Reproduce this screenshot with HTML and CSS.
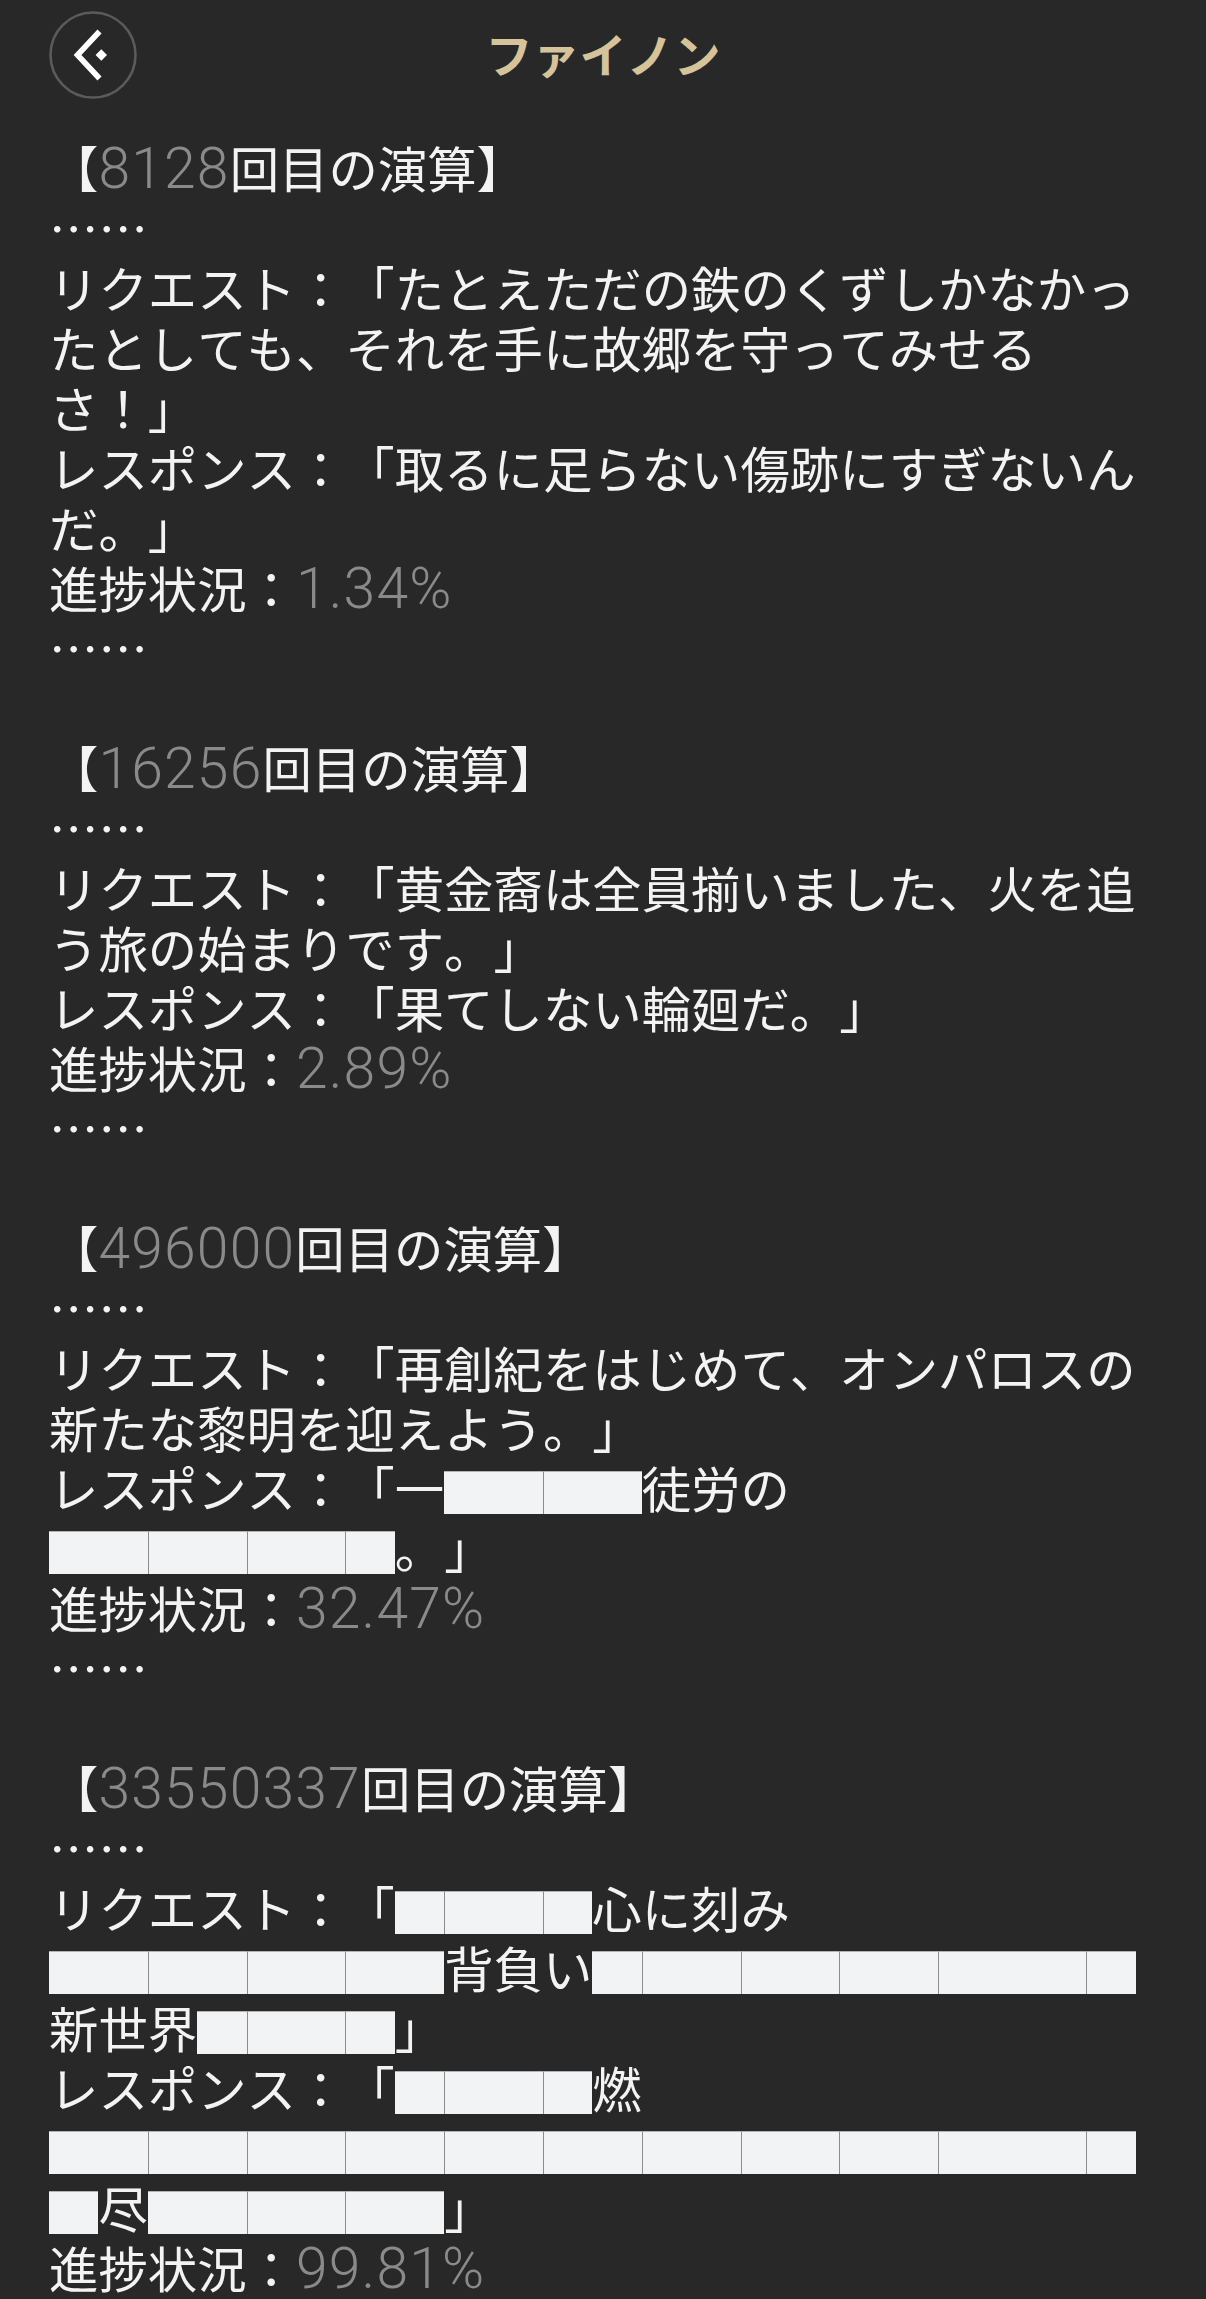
FILE: index.html
```html
<!DOCTYPE html>
<html lang="ja">
<head>
<meta charset="utf-8">
<title>ファイノン</title>
<link rel="stylesheet" href="styles.css">
</head>
<body>
<header class="header">
  <div class="back">
    <svg width="90" height="90" viewBox="0 0 90 90">
      <circle cx="45" cy="45" r="42.5" fill="none" stroke="#5b5b5b" stroke-width="2.6"/>
      <polyline points="51.5,21.5 29.5,45 51.5,68.5" fill="none" stroke="#ffffff" stroke-width="5.6" stroke-linejoin="miter" stroke-miterlimit="10"/>
      <polygon points="53.3,39.3 59,45 53.3,50.7 47.6,45" fill="#ffffff"/>
    </svg>
  </div>
  <h1 class="title">ファイノン</h1>
  <div></div>
</header>
<main class="content">
  <section class="entry">
    <div class="ln">【<span class="num">8128</span>回目の演算】</div>
    <div class="ln">……</div>
    <div class="ln">リクエスト：「たとえただの鉄のくずしかなかっ</div>
    <div class="ln">たとしても、それを手に故郷を守ってみせる</div>
    <div class="ln">さ！」</div>
    <div class="ln">レスポンス：「取るに足らない傷跡にすぎないん</div>
    <div class="ln">だ。」</div>
    <div class="ln">進捗状況：<span class="num">1.34%</span></div>
    <div class="ln">……</div>
    <div class="ln"></div>
  </section>
  <section class="entry">
    <div class="ln">【<span class="num">16256</span>回目の演算】</div>
    <div class="ln">……</div>
    <div class="ln">リクエスト：「黄金裔は全員揃いました、火を追</div>
    <div class="ln">う旅の始まりです。」</div>
    <div class="ln">レスポンス：「果てしない輪廻だ。」</div>
    <div class="ln">進捗状況：<span class="num">2.89%</span></div>
    <div class="ln">……</div>
    <div class="ln"></div>
  </section>
  <section class="entry">
    <div class="ln">【<span class="num">496000</span>回目の演算】</div>
    <div class="ln">……</div>
    <div class="ln">リクエスト：「再創紀をはじめて、オンパロスの</div>
    <div class="ln">新たな黎明を迎えよう。」</div>
    <div class="ln">レスポンス：「一<span class="rd"><span class="seg s2"></span><span class="seg s2"></span></span>徒労の</div>
    <div class="ln"><span class="rd"><span class="seg s2"></span><span class="seg s2"></span><span class="seg s2"></span><span class="seg s1"></span></span>。」</div>
    <div class="ln">進捗状況：<span class="num">32.47%</span></div>
    <div class="ln">……</div>
    <div class="ln"></div>
  </section>
  <section class="entry">
    <div class="ln">【<span class="num">33550337</span>回目の演算】</div>
    <div class="ln">……</div>
    <div class="ln">リクエスト：「<span class="rd"><span class="seg s1"></span><span class="seg s2"></span><span class="seg s1"></span></span>心に刻み</div>
    <div class="ln"><span class="rd"><span class="seg s2"></span><span class="seg s2"></span><span class="seg s2"></span><span class="seg s2"></span></span>背負い<span class="rd"><span class="seg s1"></span><span class="seg s2"></span><span class="seg s2"></span><span class="seg s2"></span><span class="seg s3"></span><span class="seg s1"></span></span></div>
    <div class="ln">新世界<span class="rd"><span class="seg s1"></span><span class="seg s2"></span><span class="seg s1"></span></span>」</div>
    <div class="ln">レスポンス：「<span class="rd"><span class="seg s1"></span><span class="seg s2"></span><span class="seg s1"></span></span>燃</div>
    <div class="ln"><span class="rd"><span class="seg s2"></span><span class="seg s2"></span><span class="seg s2"></span><span class="seg s2"></span><span class="seg s2"></span><span class="seg s2"></span><span class="seg s2"></span><span class="seg s2"></span><span class="seg s2"></span><span class="seg s3"></span><span class="seg s1"></span></span></div>
    <div class="ln"><span class="rd"><span class="seg s1"></span></span>尽<span class="rd"><span class="seg s2"></span><span class="seg s2"></span><span class="seg s2"></span></span>」</div>
    <div class="ln">進捗状況：<span class="num">99.81%</span></div>
    <div class="ln">……</div>
  </section>
</main>
</body>
</html>
```
FILE: styles.css
```css
html, body {
  margin: 0;
  padding: 0;
}

body {
  background: #282828;
  color: #f3f3f3;
  font-family: "Noto Sans CJK JP", sans-serif;
  width: 1206px;
  overflow: hidden;
  text-spacing-trim: space-all;
  font-kerning: none;
}

.header {
  display: grid;
  grid-template-columns: 1fr auto 1fr;
  align-items: center;
  height: 110px;
}

.back {
  margin-left: 48px;
  width: 90px;
  height: 90px;
}

.back svg {
  display: block;
}

.title {
  margin: 0 0 6px;
  font-size: 47px;
  font-weight: 700;
  line-height: 1;
  color: #d5c49b;
  letter-spacing: 0;
}

.content {
  padding: 27px 0 0 49px;
}

.ln {
  height: 60px;
  line-height: 60px;
  font-size: 49.4px;
  white-space: nowrap;
}

.num {
  font-family: Roboto, "Liberation Sans", sans-serif;
  font-weight: 300;
  font-size: 57px;
  letter-spacing: 1.2px;
  line-height: 0;
  color: #8a8a8a;
}

.rd {
  display: inline-flex;
  vertical-align: top;
  margin-top: 14px;
  height: 43px;
}

.seg {
  box-sizing: border-box;
  height: 43px;
  background: #f2f3f5;
  border-top: 1px solid #b4b4b4;
}

.seg + .seg {
  border-left: 1px solid #8c8c8c;
}

.s1 { width: 49.4px; }
.s2 { width: 98.8px; }
.s3 { width: 148.2px; }
```
